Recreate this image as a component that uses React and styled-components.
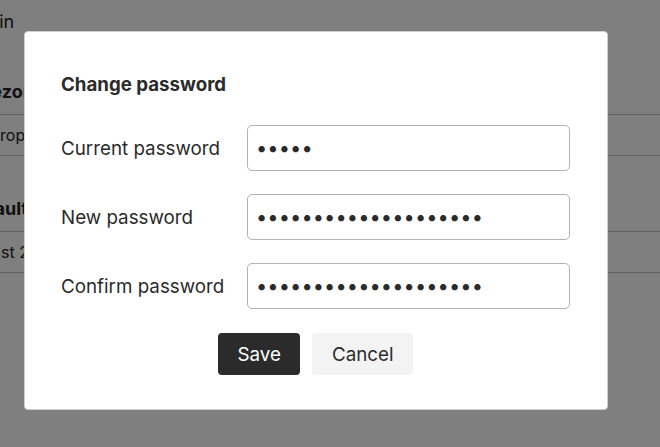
import React from 'react'
import styled, { createGlobalStyle } from 'styled-components'

const GlobalStyle = createGlobalStyle`
  html, body {
    margin: 0;
    padding: 0;
    background: #ffffff;
    font-family: Inter, 'Noto Sans', sans-serif;
    color: #222;
  }
`

const Page = styled.div`
  width: 660px;
  height: 447px;
  overflow: hidden;
  padding-top: 10px;
  box-sizing: border-box;
`

const PageLine = styled.div`
  font-size: 18px;
  line-height: 24px;
  margin-left: ${props => props.shift}px;
  white-space: nowrap;
`

const SectionTitle = styled.div`
  font-size: 18px;
  font-weight: 700;
  line-height: 24px;
  margin-top: ${props => props.top}px;
  padding-bottom: 10px;
  border-bottom: 1px solid #c4c4c4;
  white-space: nowrap;
`

const TableRow = styled.div`
  font-size: 16px;
  line-height: 20px;
  padding: 10px 0;
  border-bottom: 1px solid #c4c4c4;
  white-space: nowrap;
`

const Clip = styled.span`
  display: inline-block;
  margin-left: ${props => props.shift}px;
`

const Overlay = styled.div`
  position: fixed;
  inset: 0;
  background: rgba(0, 0, 0, 0.5);
  padding: 31px 0 0 24px;
  box-sizing: border-box;
`

const Modal = styled.div`
  width: 584px;
  height: 379px;
  box-sizing: border-box;
  background: #fff;
  border: 1px solid #d0d0d0;
  border-radius: 4px;
  padding: 42px 37px 0 36px;
`

const Title = styled.h2`
  margin: 0 0 29px;
  font-size: 18.7px;
  line-height: 22px;
  font-weight: 700;
  color: #2b2b2b;
`

const Form = styled.div`
  display: grid;
  grid-template-columns: 186px minmax(0, 1fr);
  row-gap: 23px;
  align-items: center;
`

const Label = styled.label`
  font-size: 18.8px;
  color: #2b2b2b;
`

const Input = styled.input`
  width: 100%;
  min-width: 0;
  height: 46px;
  box-sizing: border-box;
  border: 1px solid #b3b3b3;
  border-radius: 5px;
  padding: 0 8px;
  font-family: Inter, sans-serif;
  font-size: 20px;
  letter-spacing: 0.1px;
  color: #2b2b2b;
  outline: none;
`

const Actions = styled.div`
  display: flex;
  justify-content: center;
  gap: 12px;
  margin-top: 24px;
`

const Button = styled.button`
  height: 42px;
  padding: 0 19.5px;
  border: none;
  border-radius: 4px;
  font-family: Inter, sans-serif;
  font-size: 18.8px;
  cursor: pointer;
  background: ${props => (props.primary ? '#2b2b2b' : '#f3f3f3')};
  color: ${props => (props.primary ? '#ffffff' : '#2b2b2b')};
`

const App = () => {
  return (
    <>
      <GlobalStyle />
      <Page>
        <PageLine shift={-40}>Admin</PageLine>
        <SectionTitle top={46}>
          <Clip shift={-42}>Timezone</Clip>
        </SectionTitle>
        <TableRow>
          <Clip shift={-19}>Europe/Berlin</Clip>
        </TableRow>
        <SectionTitle top={41}>
          <Clip shift={-36}>Default period</Clip>
        </SectionTitle>
        <TableRow>
          <Clip shift={-17}>Last 24 hours</Clip>
        </TableRow>
      </Page>
      <Overlay>
        <Modal>
          <Title>Change password</Title>
          <Form>
            <Label htmlFor="current">Current password</Label>
            <Input id="current" type="password" defaultValue="12345" />
            <Label htmlFor="new">New password</Label>
            <Input id="new" type="password" defaultValue="abcdefghijklmnopqrst" />
            <Label htmlFor="confirm">Confirm password</Label>
            <Input id="confirm" type="password" defaultValue="abcdefghijklmnopqrst" />
          </Form>
          <Actions>
            <Button primary>Save</Button>
            <Button>Cancel</Button>
          </Actions>
        </Modal>
      </Overlay>
    </>
  )
}

export default App
